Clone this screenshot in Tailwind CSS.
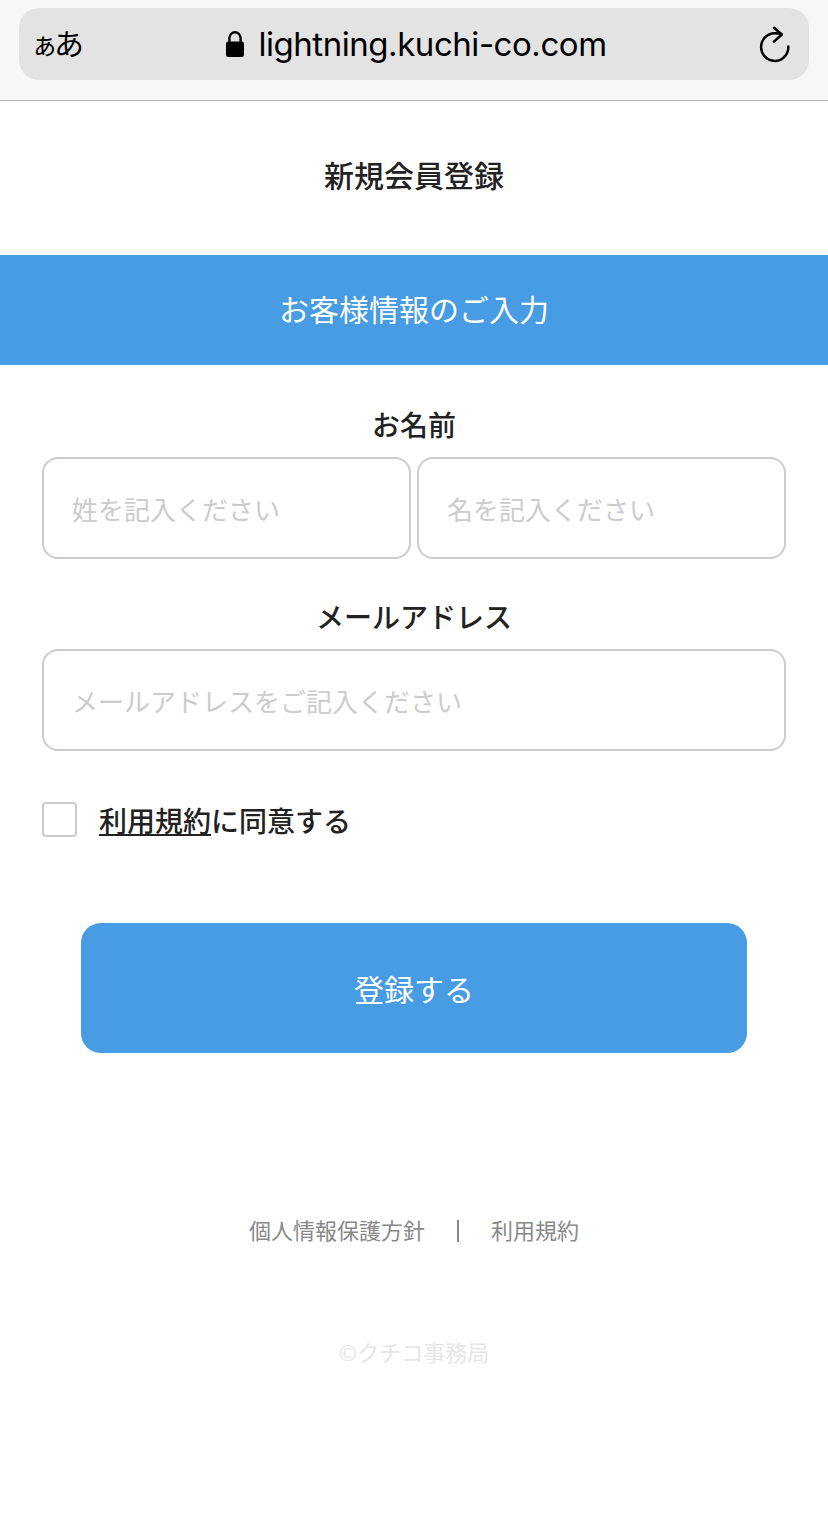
<!DOCTYPE html>
<html lang="ja">
<head>
    <meta charset="UTF-8">
    <title>新規会員登録</title>
    <meta name="viewport" content="width=device-width, initial-scale=1.0">
    <script src="https://cdn.jsdelivr.net/npm/@tailwindcss/browser@4"></script>
</head>
<body class="bg-white text-[#222] font-['Noto_Sans_CJK_JP',sans-serif] font-normal">
<!-- Browser bar -->
<div class="h-[101px] bg-[#f7f7f7] border-b border-[#b2b2b2] px-[19px] pt-2">
    <div class="relative h-[72px] rounded-[20px] bg-[#e3e3e3] flex items-center justify-center pl-[5px] text-black">
        <div class="absolute left-3 top-[12px] flex items-baseline leading-[44px]">
            <span class="text-[27px] tracking-[-4px]">ぁ</span><span class="text-[30px]">あ</span>
        </div>
        <svg class="w-[18px] h-[26px] mr-[14px]" viewBox="0 0 18 26" fill="none">
            <rect x="0" y="10.5" width="18" height="15.5" rx="2.2" fill="#000"/>
            <path d="M3.4 12V7a5.6 5.7 0 0 1 11.2 0V12" stroke="#000" stroke-width="2.4"/>
        </svg>
        <span class="font-['Inter',sans-serif] text-[33px] tracking-[-0.45px] leading-[44px] whitespace-nowrap">lightning.kuchi-co.com</span>
        <svg class="absolute right-[18px] top-[17px] w-8 h-[38px]" viewBox="0 0 32 38" fill="none" stroke="#000" stroke-width="2.5" stroke-linecap="round" stroke-linejoin="round">
            <path d="M22.500 9.300C20.500 8.600 18.500 8.300 16 8.300A13.600 13.800 0 1 0 29.300 21.500"/>
            <path d="M15 2.700l7.800 6.800-7.800 7.200"/>
        </svg>
    </div>
</div>

<h1 class="h-[154px] flex items-center justify-center text-[30px] leading-[44px] pb-2 font-medium">新規会員登録</h1>
<h2 class="h-[110px] flex items-center justify-center bg-[#489ce3] text-white text-[30px] pb-1">お客様情報のご入力</h2>

<form class="px-[42px] pt-[38px]">
    <p class="text-center text-[28px] leading-[42px] mb-3 font-medium">お名前</p>
    <div class="flex gap-[6px]">
        <input type="text" placeholder="姓を記入ください" class="w-0 flex-1 h-[102px] border-2 border-[#ccc] rounded-2xl px-7 text-[26px] placeholder:text-[#ccc]">
        <input type="text" placeholder="名を記入ください" class="w-0 flex-1 h-[102px] border-2 border-[#ccc] rounded-2xl px-7 text-[26px] placeholder:text-[#ccc]">
    </div>
    <p class="text-center text-[28px] leading-[42px] mt-9 mb-3 font-medium">メールアドレス</p>
    <input type="email" placeholder="メールアドレスをご記入ください" class="w-full block h-[102px] border-2 border-[#ccc] rounded-2xl px-7 text-[26px] placeholder:text-[#ccc]">
    <label class="flex items-center mt-[46px] h-[44px] text-[28px]">
        <span class="w-[35px] h-[35px] border-2 border-[#ccc] rounded-[4px] mr-[22px]"></span>
        <span class="pt-[2px] font-medium"><a href="#" class="underline">利用規約</a>に同意する</span>
    </label>
    <button type="button" class="block w-[666px] h-[130px] mx-auto mt-[82px] bg-[#489ce3] text-white text-[30px] rounded-[20px]">登録する</button>
</form>

<footer class="mt-[158px] text-[22px] leading-[36px]">
    <div class="flex items-center justify-center text-[#888]">
        <a href="#">個人情報保護方針</a>
        <span class="w-[2px] h-[22px] bg-[#888] mx-8 mt-1"></span>
        <a href="#">利用規約</a>
    </div>
    <p class="mt-[86px] text-center text-[#e6e6e6]">©クチコ事務局</p>
</footer>
</body>
</html>
